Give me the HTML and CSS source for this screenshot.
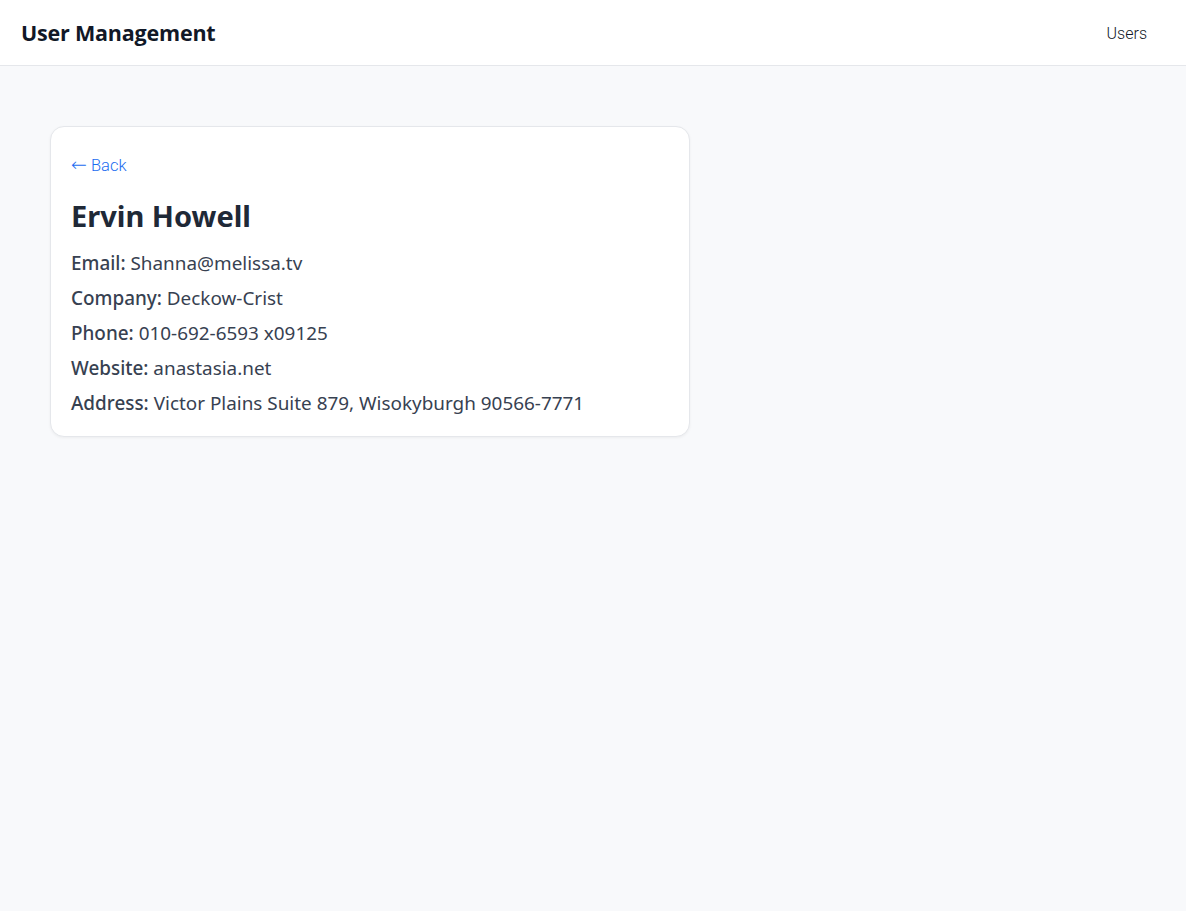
FILE: index.html
```html
<!DOCTYPE html>
<html lang="en">
<head>
<meta charset="utf-8">
<title>User Management</title>
<link rel="stylesheet" href="styles.css">
</head>
<body>
<header class="navbar">
  <div class="brand">User Management</div>
  <nav class="nav"><a class="nav-link" href="#">Users</a></nav>
</header>
<main class="main">
  <section class="card">
    <a class="back" href="#"><span class="arrow">←</span> Back</a>
    <h1 class="name">Ervin Howell</h1>
    <p class="row"><span class="label">Email:</span> Shanna@melissa.tv</p>
    <p class="row"><span class="label">Company:</span> Deckow-Crist</p>
    <p class="row"><span class="label">Phone:</span> 010-692-6593 x09125</p>
    <p class="row"><span class="label">Website:</span> anastasia.net</p>
    <p class="row"><span class="label">Address:</span> Victor Plains Suite 879, Wisokyburgh 90566-7771</p>
  </section>
</main>
</body>
</html>
```
FILE: styles.css
```css
* { box-sizing: border-box; }
html, body { margin: 0; padding: 0; }
body {
  background: #f8f9fb;
  font-family: "Noto Sans", "Open Sans", sans-serif;
  color: #1f2937;
  min-height: 911px;
}
.navbar {
  height: 66px;
  background: #ffffff;
  border-bottom: 1px solid #e5e7eb;
  display: flex;
  align-items: center;
  justify-content: space-between;
  padding: 0 39px 0 21px;
}
.brand {
  font-family: "Open Sans", sans-serif;
  font-weight: 700;
  font-size: 21.5px;
  color: #111827;
  letter-spacing: -0.2px;
}
.nav-link {
  font-family: Roboto, sans-serif;
  font-weight: 300;
  font-size: 16px;
  color: #111827;
  text-decoration: none;
}
.main {
  padding: 60px 50px;
}
.card {
  width: 640px;
  background: #ffffff;
  border: 1px solid #e5e7eb;
  border-radius: 14px;
  box-shadow: 0 1px 3px rgba(0,0,0,0.05);
  padding: 27px 20px 15px;
}
.back {
  font-family: Roboto, sans-serif;
  font-weight: 300;
  font-size: 16.5px;
  color: #1a6cf0;
  text-decoration: none;
  display: block;
  line-height: 24px;
}
.arrow {
  font-family: "DejaVu Sans", sans-serif;
  font-size: 19px;
  line-height: 1;
}
.name {
  margin: 18px 0 10px;
  font-size: 29px;
  font-weight: 700;
  line-height: 40px;
  color: #1f2937;
}
.row {
  margin: 0;
  font-size: 18.9px;
  line-height: 35px;
  color: #374151;
}
.label {
  font-weight: 500;
}
```
